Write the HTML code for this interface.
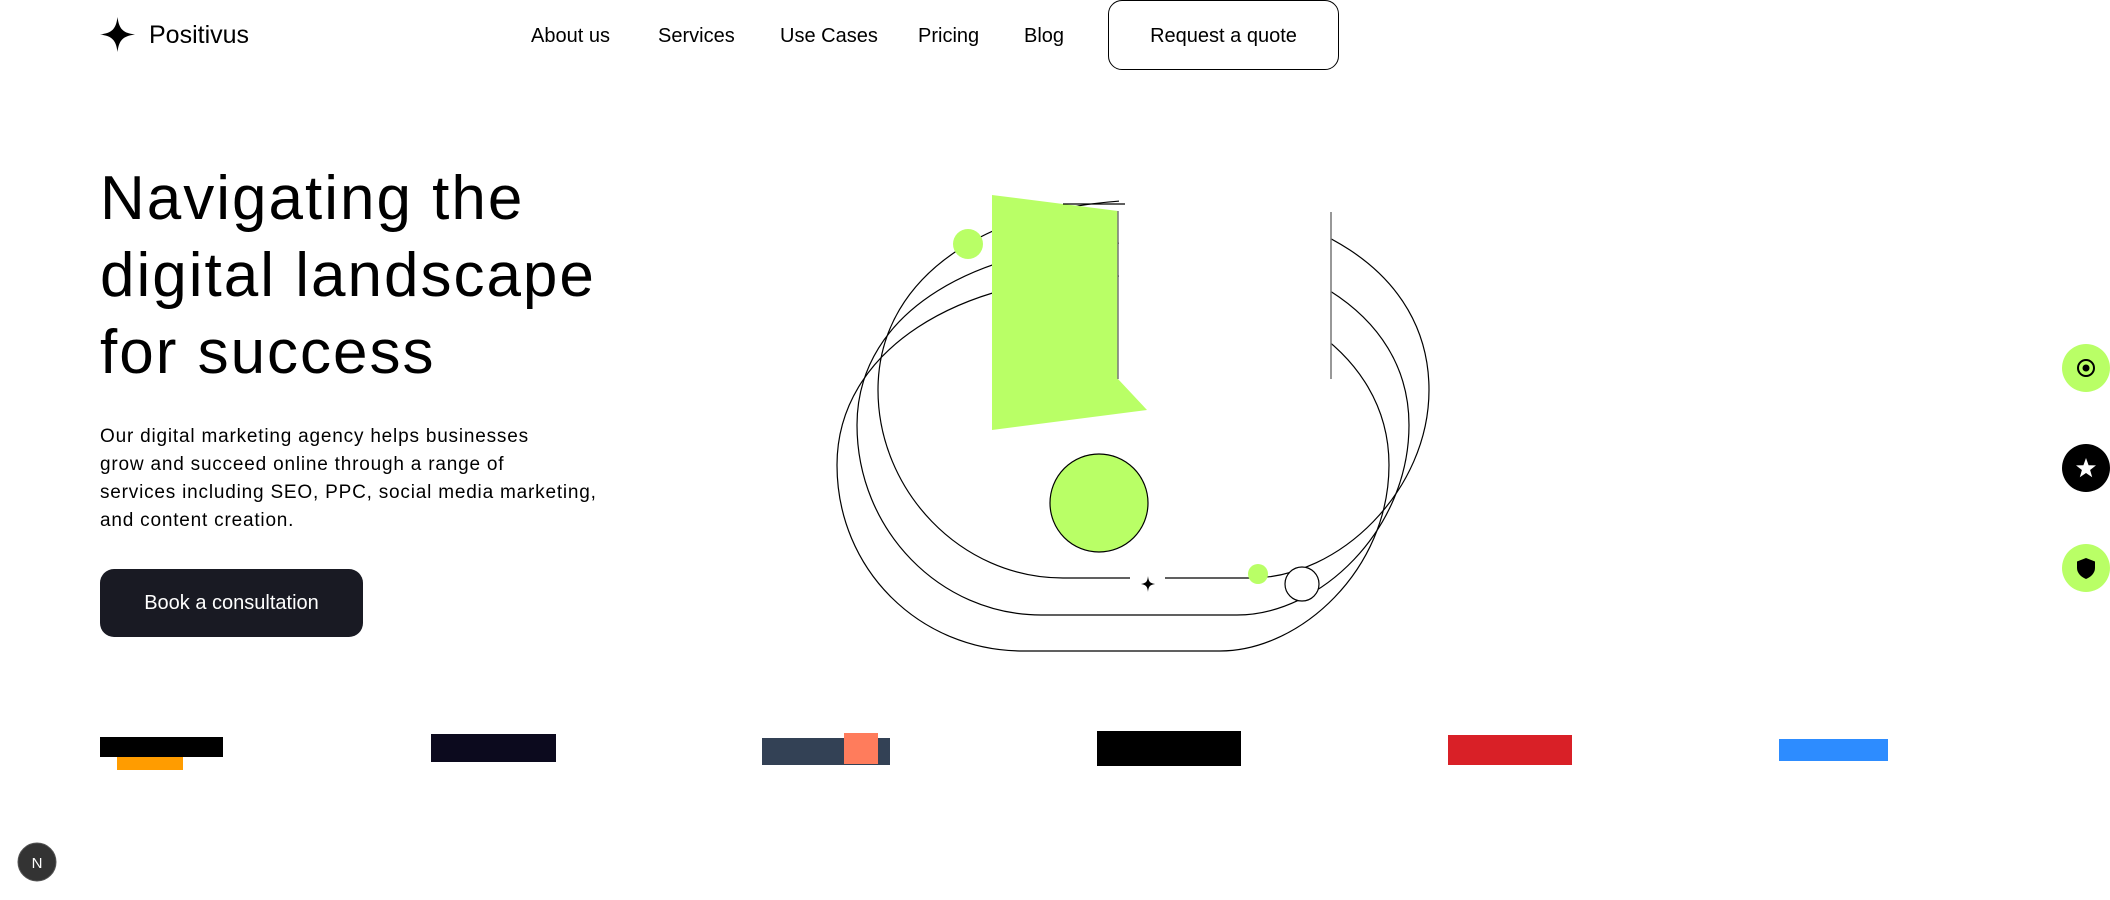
<!DOCTYPE html>
<html><head><meta charset="utf-8"><style>
*{margin:0;padding:0;box-sizing:border-box}
body{width:2110px;height:900px;background:#fff;position:relative;overflow:hidden;font-family:"Liberation Sans",sans-serif;color:#000}
.a{position:absolute}
.nav{font-size:20px;top:25px}
h1{position:absolute;left:100px;top:160px;font-size:62px;font-weight:400;line-height:77px;letter-spacing:2px;white-space:nowrap}
p.t{position:absolute;left:100px;top:423px;font-size:19px;line-height:28px;white-space:nowrap;letter-spacing:0.8px}
</style></head><body>
<svg class="a" style="left:100px;top:17px" width="35" height="35" viewBox="0 0 35 35"><path d="M17.5 0 C19 12 23 16 35 17.5 C23 19 19 23 17.5 35 C16 23 12 19 0 17.5 C12 16 16 12 17.5 0Z" fill="#000"/></svg>
<div class="a" style="left:149px;top:21px;font-size:25px">Positivus</div>
<div class="a nav" style="left:531px">About us</div>
<div class="a nav" style="left:658px">Services</div>
<div class="a nav" style="left:780px">Use Cases</div>
<div class="a nav" style="left:918px">Pricing</div>
<div class="a nav" style="left:1024px">Blog</div>
<div class="a" style="left:1108px;top:0;width:231px;height:70px;border:1px solid #000;border-radius:14px;font-size:20px;text-align:center;line-height:70px">Request a quote</div>
<h1>Navigating the<br>digital landscape<br>for success</h1>
<p class="t">Our digital marketing agency helps businesses<br>grow and succeed online through a range of<br>services including SEO, PPC, social media marketing,<br>and content creation.</p>
<div class="a" style="left:100px;top:569px;width:263px;height:68px;background:#191a23;border-radius:14px;color:#fff;font-size:20px;text-align:center;line-height:68px">Book a consultation</div>
<svg class="a" style="left:0;top:0" width="2110" height="900">
<g fill="none" stroke="#000" stroke-width="1.2">
<path d="M1063 578 C960 578 878 490 878 390 C878 270 1000 200 1153 200 C1310 200 1429 270 1429 390 C1429 490 1340 578 1251 578 Z"/>
<path d="M1041 615 C940 615 857 530 857 425 C857 310 980 243 1133 243 C1290 243 1409 310 1409 425 C1409 530 1320 615 1237 615 Z"/>
<path d="M1023 651 C920 651 837 570 837 465 C837 350 960 276 1113 276 C1270 276 1389 350 1389 465 C1389 570 1300 651 1220 651 Z"/>
</g>
<rect x="1119" y="150" width="212" height="229" fill="#fff"/>
<rect x="1130" y="570" width="35" height="20" fill="#fff"/>
<polygon points="992,195 1118,211 1118,379 1147,410 992,430" fill="#b9ff66"/>
<line x1="1063" y1="204" x2="1125" y2="204" stroke="#000" stroke-width="1.2"/>
<line x1="1118" y1="211" x2="1118" y2="379" stroke="#777" stroke-width="1.5"/>
<line x1="1331" y1="212" x2="1331" y2="379" stroke="#777" stroke-width="1.5"/>
<circle cx="968" cy="244" r="15" fill="#b9ff66"/>
<circle cx="1099" cy="503" r="49" fill="#b9ff66" stroke="#000" stroke-width="1.2"/>
<circle cx="1258" cy="574" r="10" fill="#b9ff66"/>
<circle cx="1302" cy="584" r="17" fill="#fff" stroke="#000" stroke-width="1.2"/>
<path d="M1148 576 C1148.7 582 1150 583 1155 584 C1150 585 1148.7 586 1148 592 C1147.3 586 1146 585 1141 584 C1146 583 1147.3 582 1148 576Z" fill="#000"/>
<rect x="100" y="737" width="123" height="20" fill="#000"/>
<rect x="117" y="757" width="66" height="13" fill="#ff9c00"/>
<rect x="431" y="734" width="125" height="28" fill="#0c0a1e"/>
<rect x="762" y="738" width="128" height="27" fill="#334155"/>
<rect x="844" y="733" width="34" height="31" fill="#ff7c5c"/>
<rect x="1097" y="731" width="144" height="35" fill="#000"/>
<rect x="1448" y="735" width="124" height="30" fill="#d92027"/>
<rect x="1779" y="739" width="109" height="22" fill="#2d8cff"/>
<circle cx="2086" cy="368" r="24" fill="#b9ff66"/>
<circle cx="2086" cy="368" r="8" fill="none" stroke="#000" stroke-width="2"/>
<circle cx="2086" cy="368" r="3.5" fill="#000"/>
<circle cx="2086" cy="468" r="24" fill="#000"/>
<path d="M2086 458 L2088.6 465.2 L2096 465.4 L2090.1 470 L2092.2 477.2 L2086 473 L2079.8 477.2 L2081.9 470 L2076 465.4 L2083.4 465.2Z" fill="#fff"/>
<circle cx="2086" cy="568" r="24" fill="#b9ff66"/>
<path d="M2086 558 L2095 561.5 L2095 568 C2095 573 2091 577 2086 579 C2081 577 2077 573 2077 568 L2077 561.5Z" fill="#000"/>
<circle cx="37" cy="862" r="19" fill="#333" stroke="#555" stroke-width="1"/>
<text x="37" y="868" font-family="Liberation Sans" font-size="15" fill="#fff" text-anchor="middle">N</text>
</svg>
</body></html>
